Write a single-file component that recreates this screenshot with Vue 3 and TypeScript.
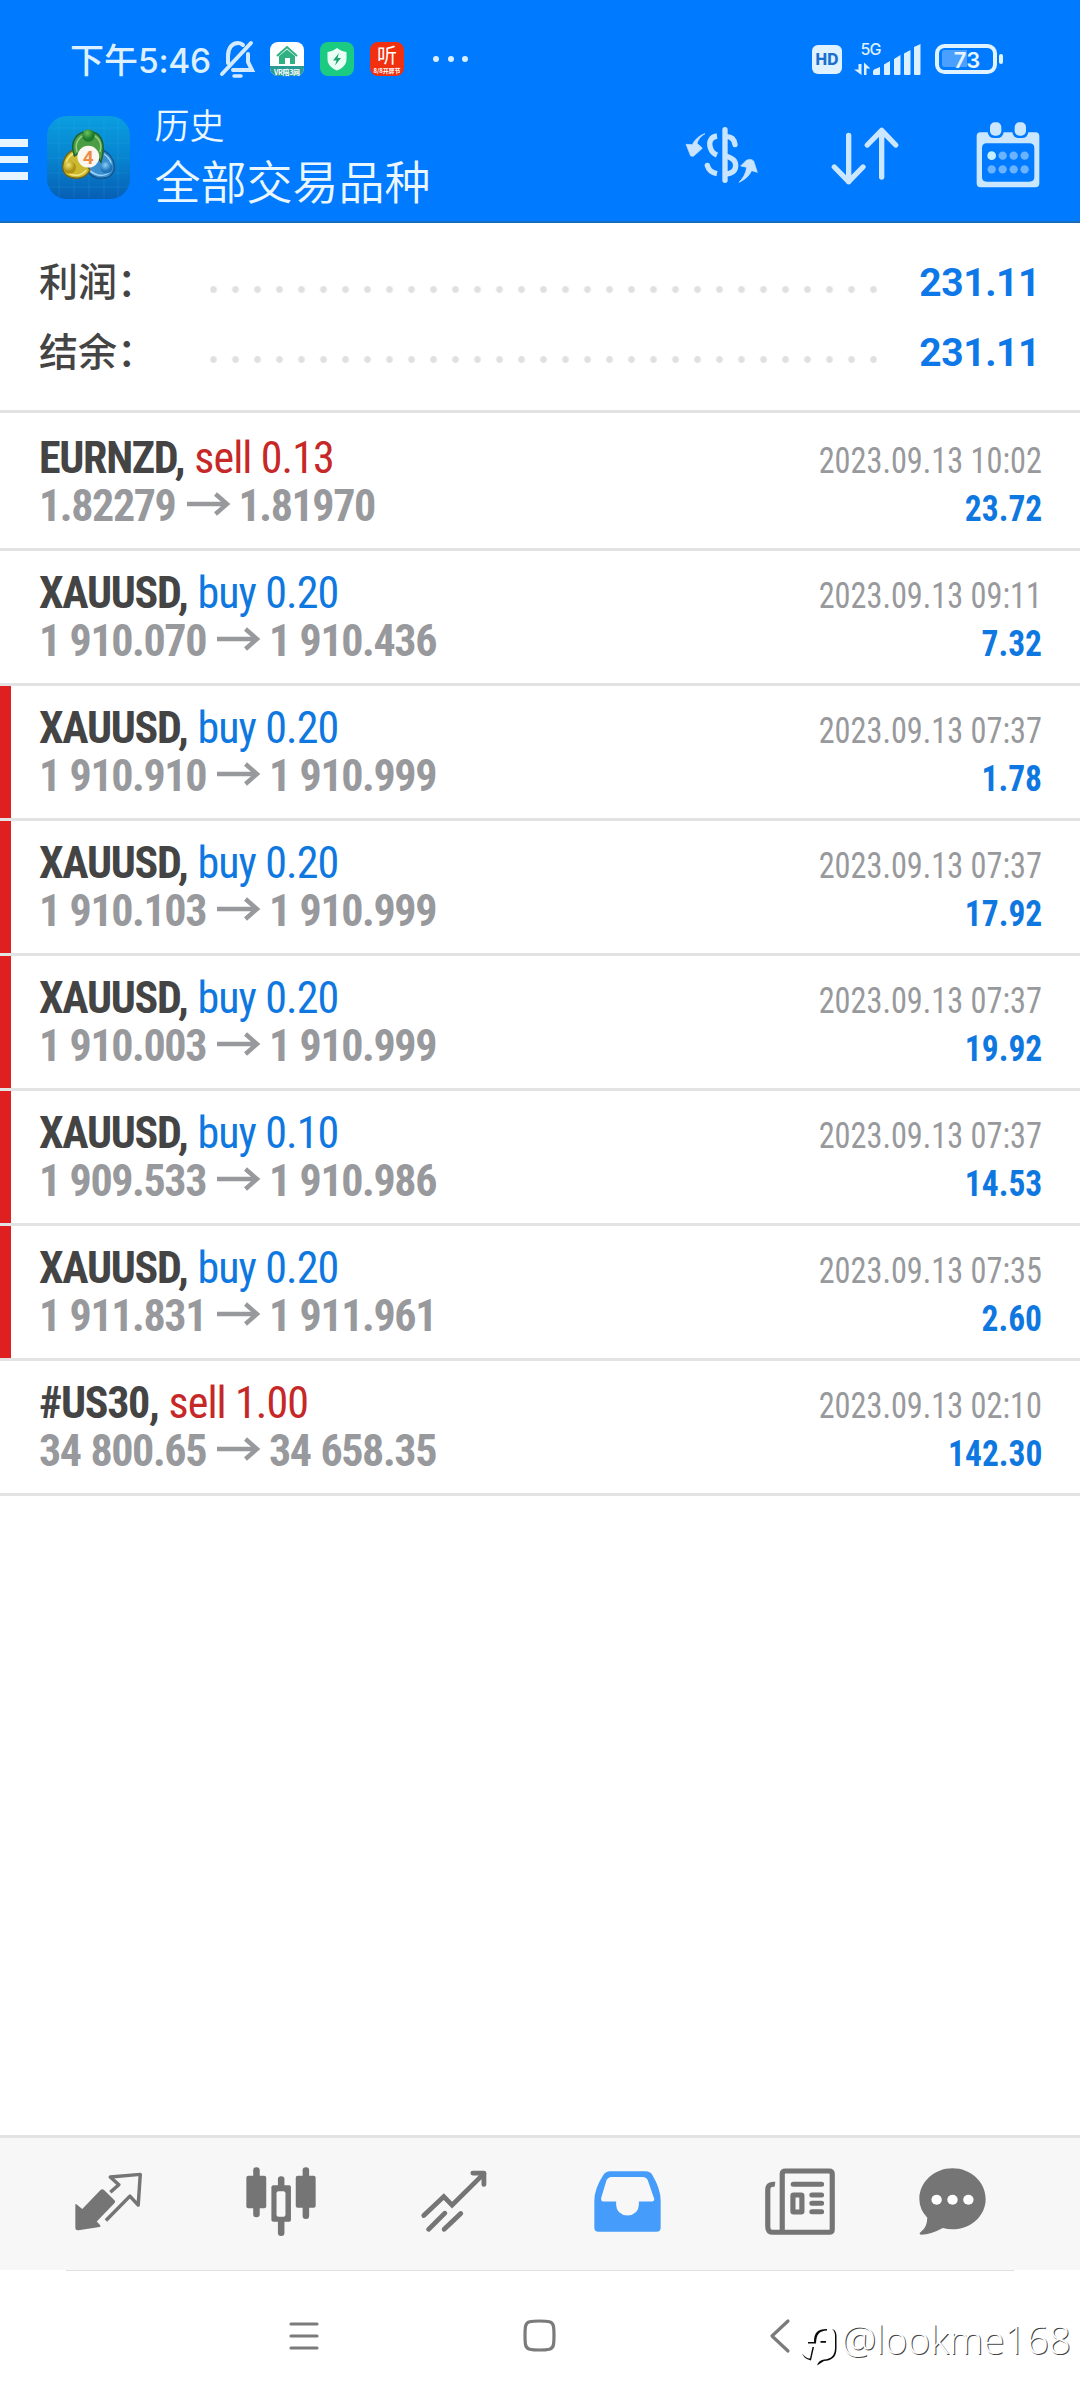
<script setup lang="ts">
interface Deal {
  symbol: string
  side: 'buy' | 'sell'
  volume: string
  open: string
  close: string
  time: string
  profit: string
  marked?: boolean
}

const totals = [
  { label: '利润：', value: '231.11' },
  { label: '结余：', value: '231.11' },
]

const deals: Deal[] = [
  { symbol: 'EURNZD', side: 'sell', volume: '0.13', open: '1.82279', close: '1.81970', time: '2023.09.13 10:02', profit: '23.72' },
  { symbol: 'XAUUSD', side: 'buy', volume: '0.20', open: '1 910.070', close: '1 910.436', time: '2023.09.13 09:11', profit: '7.32' },
  { symbol: 'XAUUSD', side: 'buy', volume: '0.20', open: '1 910.910', close: '1 910.999', time: '2023.09.13 07:37', profit: '1.78', marked: true },
  { symbol: 'XAUUSD', side: 'buy', volume: '0.20', open: '1 910.103', close: '1 910.999', time: '2023.09.13 07:37', profit: '17.92', marked: true },
  { symbol: 'XAUUSD', side: 'buy', volume: '0.20', open: '1 910.003', close: '1 910.999', time: '2023.09.13 07:37', profit: '19.92', marked: true },
  { symbol: 'XAUUSD', side: 'buy', volume: '0.10', open: '1 909.533', close: '1 910.986', time: '2023.09.13 07:37', profit: '14.53', marked: true },
  { symbol: 'XAUUSD', side: 'buy', volume: '0.20', open: '1 911.831', close: '1 911.961', time: '2023.09.13 07:35', profit: '2.60', marked: true },
  { symbol: '#US30', side: 'sell', volume: '1.00', open: '34 800.65', close: '34 658.35', time: '2023.09.13 02:10', profit: '142.30' },
]
</script>

<template>
  <div class="screen">
    <header class="top">
      <div class="status">
        <span class="clock">下午<b>5:46</b></span>
        <svg class="bell" width="35" height="38" viewBox="0 0 35 38" fill="none" stroke="#d4ebff" stroke-width="4" stroke-linecap="round">
          <path d="M2 34 L31 3" />
          <path d="M8 23 V16 C8 8 12 3 18 3 C20 3 22 4 23 5" />
          <path d="M28 14 V22 L32 30 H13" />
          <path d="M14 36 H21" stroke-width="3.5" />
        </svg>
        <svg class="badge" width="34" height="34" viewBox="0 0 34 34">
          <rect width="34" height="34" rx="8" fill="#fff" />
          <path d="M0 24 H34 V26 A8 8 0 0 1 26 34 H8 A8 8 0 0 1 0 26Z" fill="#2a9a94" />
          <path d="M7 14 L17 5 L27 14" fill="none" stroke="#2fb183" stroke-width="2" />
          <path d="M9 14 L17 7.500 L25 14 V22 H20 V16 H15 V22 H9Z" fill="#2fb183" />
          <text x="17" y="32.500" text-anchor="middle" class="micro" textLength="26">VR陪3网</text>
        </svg>
        <svg class="badge" width="34" height="34" viewBox="0 0 34 34">
          <rect width="34" height="34" rx="8" fill="#1ccb82" />
          <path d="M17 6 C20 8.500 23 9.500 26.500 10 V17 C26.500 23 22 26.500 17 28.500 C12 26.500 7.500 23 7.500 17 V10 C11 9.500 14 8.500 17 6Z" fill="#eafff5" />
          <path d="M19 11 L13 18.500 H16.500 L15 23.500 L21 16 H17.500Z" fill="#1aa56c" />
        </svg>
        <svg class="badge" width="34" height="34" viewBox="0 0 34 34">
          <rect width="34" height="34" rx="8" fill="#f0300f" />
          <text x="17" y="21" text-anchor="middle" class="listen">听</text>
          <text x="17" y="30.500" text-anchor="middle" class="micro small" textLength="27">8/8开屏节</text>
        </svg>
        <span class="more"><i /><i /><i /></span>
        <span class="hd">HD</span>
        <svg class="signal" width="68" height="34" viewBox="0 0 68 34" fill="#dcf0ff">
          <text x="6.500" y="12.500" class="gen" textLength="21">5G</text>
          <path d="M4.500 22 H7.500 V33 L0 27.500 H4.500Z M10 33 V20.500 L16.500 26.500 H12.500 V33Z" />
          <path d="M20 27.500 L26 25 V32 Q26 33 25 33 H20 Q19 33 19 32 V29Z" />
          <path d="M30 22.500 L36 19 V32 Q36 33 35 33 H31 Q30 33 30 32Z" />
          <path d="M40 17 L46.500 13 V32 Q46.500 33 45.500 33 H41 Q40 33 40 32Z" />
          <path d="M50 11.500 L56.500 8 V32 Q56.500 33 55.500 33 H51 Q50 33 50 32Z" />
          <path d="M60 5 L66.500 2 V32 Q66.500 33 65.500 33 H61 Q60 33 60 32Z" />
        </svg>
        <svg class="battery" width="68" height="30" viewBox="0 0 68 30">
          <rect x="2" y="2" width="58" height="26" rx="7.500" fill="none" stroke="#e0f3ff" stroke-width="4" />
          <path d="M9 6 H32 V23 H9 Q7 23 7 21 V8 Q7 6 9 6Z" fill="#4a9fff" />
          <rect x="64" y="10" width="4" height="10" rx="2" fill="#e0f3ff" />
          <text x="32" y="23.500" text-anchor="middle" class="level">73</text>
        </svg>
      </div>

      <div class="toolbar">
        <span class="burger"><i /><i /><i /></span>
        <svg class="logo" width="83" height="83" viewBox="0 0 83 83">
          <defs>
            <linearGradient id="tile" x1="0" y1="0" x2="0" y2="1">
              <stop offset="0" stop-color="#0a9ee0" />
              <stop offset=".5" stop-color="#0784cf" />
              <stop offset="1" stop-color="#075fb5" />
            </linearGradient>
            <radialGradient id="green" cx=".4" cy=".3"><stop offset="0" stop-color="#6cc45c" /><stop offset="1" stop-color="#1c7a2b" /></radialGradient>
            <radialGradient id="gold" cx=".4" cy=".3"><stop offset="0" stop-color="#f4e571" /><stop offset="1" stop-color="#ad9313" /></radialGradient>
            <radialGradient id="azure" cx=".4" cy=".3"><stop offset="0" stop-color="#8bd0f7" /><stop offset="1" stop-color="#1f74b8" /></radialGradient>
          </defs>
          <rect width="83" height="83" rx="20" fill="url(#tile)" />
          <path d="M12 2V81M27 1V82M42 1V82M57 1V82M71 2V81M1 12H82M1 27H82M1 42H82M1 57H82M1 71H82" stroke="#43b9ee" stroke-opacity=".16" />
          <g stroke-width="1.500">
            <path d="M56 34 C65 39 68 47 67 54 C65 61 58 63 51 62 C45 61 41 57 38 52Z" fill="#3a8fd0" stroke="#14568c" />
            <path d="M57 38 C63 42 65 48 64 53 C62 59 56 60 51 59 C47 58 44 56 42 53" fill="none" stroke="#9ad4f7" />
            <path d="M29 33 C19 36 15 45 16 53 C17 60 24 63 32 62 C38 61 41 58 43 54Z" fill="#cdb92f" stroke="#6d651b" />
            <path d="M27 37 C20 41 18 47 19 53 C20 58 26 60 32 59 C35 58 38 56 39 54" fill="none" stroke="#f6ea86" />
            <path d="M27.500 40 C22 25 30 15.500 41.500 15.500 C53 15.500 60 25 54 46 L47 36 H34Z" fill="#4a9d45" stroke="#1f5f35" />
            <path d="M30 36 C27 26 33 18.500 41.500 18.500 C50 18.500 56 26 53 36" fill="none" stroke="#93d07e" />
          </g>
          <circle cx="41.500" cy="19.500" r="6.300" fill="url(#green)" />
          <circle cx="22.700" cy="51.500" r="6.300" fill="url(#gold)" />
          <circle cx="59.500" cy="51.500" r="6" fill="url(#azure)" />
          <circle cx="41.300" cy="40.700" r="10.900" fill="#fbf6f0" />
          <text x="41.300" y="47.500" text-anchor="middle" class="four">4</text>
        </svg>
        <div class="titles">
          <span class="sub">历史</span>
          <span class="main">全部交易品种</span>
        </div>
        <svg class="swap" width="72" height="56" viewBox="0 0 216 168" fill="#c8e4ff">
          <path d="M57 20 C44 27 36 38 33 49 L49 63 L46 67 L22 88 L14 87 L0 52 L19 53 C26 39 39 25 57 20Z" stroke="#c8e4ff" stroke-width="2" stroke-linejoin="round" />
          <path d="M159 166 C176 158 189 148 197 131 L214 136 L203 102 C198 96 188 96 181 100 L164 117 L182 121 C180 139 171 154 159 166Z" stroke="#c8e4ff" stroke-width="2" stroke-linejoin="round" />
          <g fill="none" stroke="#c8e4ff" stroke-width="16">
            <path d="M93 27 C73 30 68 45 73 62 C77 75 83 80 93 84" />
            <path d="M64 115 C68 130 77 137 93 140" stroke-linecap="butt" />
            <path d="M117 8 V160" stroke-linecap="round" />
            <path d="M122 29 C136 29 145 37 147 53" stroke-linecap="round" />
            <path d="M120 87 C138 93 149 99 149 115 C149 134 135 140 120 141" />
          </g>
          <circle cx="64" cy="115" r="8" />
        </svg>
        <svg class="sort" width="68" height="58" viewBox="0 0 204 174" fill="none" stroke="#cbe7ff" stroke-width="16" stroke-linecap="round" stroke-linejoin="round">
          <path d="M53 25 V164 M10 120 L53 164 L96 120" />
          <path d="M152 150 V10 M109 54 L152 10 L194 54" />
        </svg>
        <svg class="calendar" width="64" height="66" viewBox="0 0 192 198">
          <path d="M14 31 H178 Q190 31 190 43 V184 Q190 196 178 196 H14 Q2 196 2 184 V43 Q2 31 14 31Z M32 64 Q18 64 18 78 V165 Q18 179 32 179 H160 Q175 179 175 165 V78 Q175 64 160 64Z" fill="#cbe6ff" fill-rule="evenodd" />
          <rect x="35" y="-5" width="48" height="53" rx="19" fill="#007aff" />
          <rect x="109" y="-5" width="48" height="53" rx="19" fill="#007aff" />
          <rect x="42" y="1" width="34" height="40" rx="14" fill="#cbe6ff" />
          <rect x="116" y="1" width="34" height="40" rx="14" fill="#cbe6ff" />
          <g fill="#6cb3ff">
            <circle cx="47" cy="101" r="13" fill="#c5f0ff" />
            <circle cx="80" cy="101" r="12.500" /><circle cx="113" cy="101" r="12.500" /><circle cx="146" cy="101" r="12.500" />
            <circle cx="47" cy="142" r="12.500" /><circle cx="80" cy="142" r="12.500" /><circle cx="113" cy="142" r="12.500" /><circle cx="146" cy="142" r="12.500" />
          </g>
        </svg>
      </div>
    </header>

    <section class="totals">
      <div v-for="t in totals" :key="t.label" class="total">
        <span class="label">{{ t.label }}</span>
        <span class="leader" />
        <span class="amount">{{ t.value }}</span>
      </div>
    </section>

    <main class="deals">
      <article v-for="(d, i) in deals" :key="i" class="deal" :class="{ marked: d.marked }">
        <div class="line">
          <span class="name">{{ d.symbol }},</span>
          <span class="order" :class="d.side">{{ d.side }} {{ d.volume }}</span>
          <span class="time">{{ d.time }}</span>
        </div>
        <div class="line">
          <span class="price">{{ d.open }}</span>
          <svg class="arrow" width="43" height="24" viewBox="0 0 43 24" fill="none" stroke="#98999c" stroke-width="4.400">
            <path d="M0 12 H40 M28.500 2 L40 12 L28.500 22" />
          </svg>
          <span class="price">{{ d.close }}</span>
          <span class="profit">{{ d.profit }}</span>
        </div>
      </article>
    </main>

    <nav class="tabs">
      <span class="tab">
        <svg width="67" height="59" viewBox="218 159 194 176" preserveAspectRatio="none" fill="#757575">
          <path d="M219 257 Q219 253 223 256 L239 269 L292 213 Q297 208 302 213 L333 244 Q336 248 332 252 L281 307 L291 318 Q294 322 289 323 L228 333 Q219 334 219 326Z" />
          <path d="M324 216 L345 197 L320 174 L407 166 L401 258 L377 231 L311 300" fill="none" stroke="#757575" stroke-width="10" stroke-linejoin="round" stroke-linecap="square" />
        </svg>
      </span>
      <span class="tab">
        <svg width="70" height="69" viewBox="714 142 204 207" preserveAspectRatio="none" fill="#757575">
          <rect x="715" y="168" width="58" height="98" rx="6" /><rect x="735" y="143" width="19" height="150" rx="9" />
          <rect x="859" y="168" width="58" height="96" rx="6" /><rect x="879" y="143" width="19" height="155" rx="9" />
          <rect x="807" y="170" width="19" height="40" rx="9" /><rect x="807" y="295" width="19" height="54" rx="9" />
          <path d="M794 197 H840 Q845 197 845 203 V301 Q845 306 840 306 H794 Q788 306 788 301 V203 Q788 197 794 197Z" />
          <rect x="803" y="215" width="26" height="76" rx="6" fill="#f7f7f7" />
        </svg>
      </span>
      <span class="tab">
        <svg width="66" height="62" viewBox="1223 151 191 184" preserveAspectRatio="none" fill="none" stroke="#757575" stroke-width="14" stroke-linecap="round">
          <path d="M1231 286 L1289 230 L1313 255 L1405 162" stroke-linejoin="miter" />
          <path d="M1373 160 H1405 V194" stroke-linejoin="round" />
          <path d="M1245 327 L1292 279 M1290 327 L1338 280" />
        </svg>
      </span>
      <span class="tab">
        <svg width="67" height="61" viewBox="157 151 194 184" preserveAspectRatio="none">
          <path d="M204 152 H306 Q320 152 326 163 Q350 205 350 240 V322 Q350 334 338 334 H170 Q158 334 158 322 V240 Q158 205 184 163 Q191 152 204 152Z M208 169 Q197 169 193 180 L178 232 Q176 243 184 243 H221 V252 Q222 283 254 285 Q286 283 287 252 V243 H324 Q333 243 331 234 L313 180 Q309 169 298 169Z" fill="#469cfa" fill-rule="evenodd" />
        </svg>
      </span>
      <span class="tab">
        <svg width="70" height="67" viewBox="656 142 203 201" preserveAspectRatio="none">
          <path d="M685 191 Q664 188 664 208 V318 Q664 335 680 335 H842 Q851 335 851 326 V160 Q851 151 842 151 H715 Q706 151 706 160 V335" fill="none" stroke="#757575" stroke-width="15" />
          <g fill="none" stroke="#757575" stroke-width="15" stroke-linecap="round">
            <path d="M738 191 H820 M792 223 H820 M792 248 H820 M792 273 H820" />
            <rect x="737" y="223" width="26" height="51" rx="2" stroke-linejoin="round" />
          </g>
        </svg>
      </span>
      <span class="tab last">
        <svg width="67" height="67" viewBox="1102 142 194 201" preserveAspectRatio="none">
          <path d="M1199 143 C1252 143 1295 184 1295 235 C1295 286 1252 326 1199 326 Q1185 326 1171 322 Q1136 342 1108 342 Q1100 341 1107 334 Q1126 319 1126 291 Q1103 267 1103 235 C1103 184 1146 143 1199 143Z" fill="#757575" />
          <g fill="#fff"><circle cx="1153" cy="237" r="15" /><circle cx="1199" cy="237" r="15" /><circle cx="1245" cy="237" r="15" /></g>
        </svg>
      </span>
    </nav>

    <footer class="system">
      <span class="edge" />
      <div class="keys">
        <svg class="recent" width="30" height="28" viewBox="0 0 30 28" stroke="#7b7b7b" stroke-width="3.200" stroke-linecap="round">
          <path d="M2 2 H28 M2 14 H28 M2 26 H28" />
        </svg>
        <svg class="home" width="33" height="33" viewBox="0 0 33 33" fill="none" stroke="#7b7b7b" stroke-width="3.200">
          <path d="M16.500 2 C21 2 24 2.200 26.500 2.800 C29.500 3.500 30.200 5 30.600 8 C31 11 31 14 31 16.500 C31 19 31 22 30.600 25 C30.200 28 29.500 29.500 26.500 30.200 C24 30.800 21 31 16.500 31 C12 31 9 30.800 6.500 30.200 C3.500 29.500 2.800 28 2.400 25 C2 22 2 19 2 16.500 C2 14 2 11 2.400 8 C2.800 5 3.500 3.500 6.500 2.800 C9 2.200 12 2 16.500 2Z" />
        </svg>
        <svg class="back" width="20" height="34" viewBox="0 0 20 34" fill="none" stroke="#7b7b7b" stroke-width="3.200" stroke-linecap="round" stroke-linejoin="round">
          <path d="M18 2 L2 17 L18 32" />
        </svg>
        <svg class="mark" width="38" height="40" viewBox="0 0 38 40" fill="#0a0a0a">
          <path d="M6 15 H12 C12 6 15 2 25 2 V3.500 C17 4 14.500 7 14 16.500 H6Z" />
          <path d="M18.500 14 H24 V15.700 H18.500Z M10.500 20 H12 L9 33.500 C5 32.500 2 31 0 26.500 C3 30 5 31.500 8 31.500Z" />
          <path d="M30 2 C33.500 3 34.500 6 34.500 9 V21 C34.500 31 29 33.500 22 34 L15 38.500 C16 35.500 18 33 22 32.500 C29 32 32.800 29 33 21 V9 C33 6 32.500 4 30 2Z" />
        </svg>
        <span class="handle">@lookme168</span>
      </div>
    </footer>
  </div>
</template>

<style>
body {
  background: #fff;
}
</style>

<style scoped>
.screen {
  width: 1080px;
  height: 2400px;
  display: flex;
  flex-direction: column;
  overflow: hidden;
  background: #fff;
  font-family: Roboto, "Noto Sans CJK SC", sans-serif;
}
svg {
  display: block;
  flex: none;
  overflow: visible;
}
.top {
  height: 223px;
  box-sizing: border-box;
  background: #007aff;
  border-bottom: 2px solid #166dbe;
}
.status {
  height: 100px;
  padding: 18px 77px 0 70px;
  box-sizing: border-box;
  display: flex;
  align-items: center;
}
.clock {
  width: 150px;
  height: 82px;
  font: 500 34px/82px "Noto Sans CJK SC", sans-serif;
  color: #dcf0ff;
  white-space: nowrap;
}
.clock b {
  font: 500 33.500px/82px Inter, sans-serif;
  letter-spacing: -0.3px;
}
.bell {
  margin-right: 15px;
}
.badge {
  margin-right: 16px;
}
.micro {
  font: 700 7px "Noto Sans CJK SC", sans-serif;
  fill: #fff;
}
.micro.small {
  font-size: 6px;
}
.listen {
  font: 400 20px "Noto Sans CJK SC", sans-serif;
  fill: #fff;
}
.more {
  display: flex;
  gap: 8.500px;
  margin-left: 13px;
}
.more i {
  width: 6px;
  height: 6px;
  border-radius: 50%;
  background: #d9efff;
}
.hd {
  margin-left: auto;
  width: 30px;
  height: 29px;
  border-radius: 6px;
  background: #e0f1ff;
  color: #1a70cf;
  font: 800 15.500px/29px Inter, sans-serif;
  text-align: center;
}
.signal {
  margin: 0 13px 0 12px;
}
.gen {
  font: 500 16px Inter, sans-serif;
}
.level {
  font: 600 22px Inter, sans-serif;
  fill: #e6f5ff;
}
.toolbar {
  height: 121px;
  display: flex;
  align-items: flex-start;
}
.burger {
  width: 28px;
  margin-top: 39px;
  display: flex;
  flex-direction: column;
  gap: 9px;
}
.burger i {
  height: 7.500px;
  background: #e6f5ff;
}
.logo {
  margin: 16px 0 0 18.500px;
}
.four {
  font: 700 19px Roboto, sans-serif;
  fill: #ee8a42;
}
.titles {
  margin: 4px 0 0 25px;
  width: 531px;
  display: flex;
  flex-direction: column;
  color: #eaf7ff;
  font-family: "Noto Sans CJK SC", sans-serif;
  font-weight: 350;
}
.sub {
  font-size: 35px;
  line-height: 40px;
}
.main {
  font-size: 46px;
  line-height: 70px;
}
.swap {
  margin-top: 27px;
}
.sort {
  margin: 27px 0 0 73px;
}
.calendar {
  margin: 22px 0 0 77px;
}
.totals {
  height: 190px;
  box-sizing: border-box;
  padding: 23px 39px 0 39px;
  border-bottom: 3px solid #e3e3e3;
}
.total {
  height: 70px;
  display: flex;
  align-items: center;
}
.label {
  width: 171px;
  font: 500 39px/66px "Noto Sans CJK SC", sans-serif;
  margin-top: -4px;
  color: #444;
}
.leader {
  width: 667px;
  height: 7px;
  margin-top: 17px;
  background: radial-gradient(circle, #e0e0e0 3px, transparent 3.800px) 0 0 / 22px 7px;
  background-position-x: -7.500px;
}
.amount {
  margin: 3px 1px 0 auto;
  font: 700 39px/70px Roboto, sans-serif;
  letter-spacing: -0.4px;
  color: #0f78e8;
}
.deal {
  height: 135px;
  box-sizing: border-box;
  padding: 18px 38px 0 39px;
  border-bottom: 3px solid #e3e3e3;
}
.deal:first-child {
  height: 138px;
  padding-top: 21px;
}
.deal.marked {
  background: linear-gradient(#e02020, #e02020) 0 0 / 11px 100% no-repeat;
}
.line {
  height: 48px;
  line-height: 48px;
  display: flex;
  align-items: baseline;
  font-size: 44px;
  font-family: "Roboto Condensed", Roboto, sans-serif;
  font-stretch: 75%;
  white-space: nowrap;
}
.name {
  font-weight: 700;
  letter-spacing: -1.3px;
  color: #444;
}
.order {
  margin-left: 10px;
  letter-spacing: -0.900px;
}
.buy {
  color: #0f78e0;
}
.sell {
  color: #c62828;
}
.time {
  margin-left: auto;
  font-size: 36px;
  color: #98999c;
  transform: scaleX(0.897);
  transform-origin: right;
}
.price {
  font-weight: 700;
  letter-spacing: -1.400px;
  word-spacing: 1px;
  color: #98999c;
}
.arrow {
  margin: 10px 8.500px 0 11.500px;
  align-self: flex-start;
}
.profit {
  margin-left: auto;
  margin-right: -0.500px;
  font-size: 36px;
  font-weight: 700;
  transform: scaleX(0.93);
  transform-origin: right;
  color: #0f78e0;
}
.tabs {
  height: 135px;
  margin-top: auto;
  box-sizing: border-box;
  border-top: 3px solid #e3e3e3;
  background: #f7f7f7;
  padding-left: 21.500px;
  display: flex;
}
.tab {
  width: 173px;
  height: 126px;
  display: flex;
  align-items: center;
  justify-content: center;
}
.tab.last {
  width: 131px;
}
.system {
  height: 130px;
}
.edge {
  display: block;
  height: 1px;
  margin: 0 66px;
  background: #e0e0e0;
}
.keys {
  display: flex;
  align-items: center;
  height: 129px;
}
.recent {
  margin-left: 289px;
}
.home {
  margin-left: 204px;
}
.back {
  margin-left: 214px;
}
.mark {
  margin: 22px 0 0 12px;
}
.handle {
  margin: 6px 0 0 1.500px;
  font: 300 39px/50px "Open Sans", "Noto Sans", sans-serif;
  letter-spacing: -0.15px;
  color: #fff;
  text-shadow: 1px 1px 0 #444;
  white-space: nowrap;
}
</style>
